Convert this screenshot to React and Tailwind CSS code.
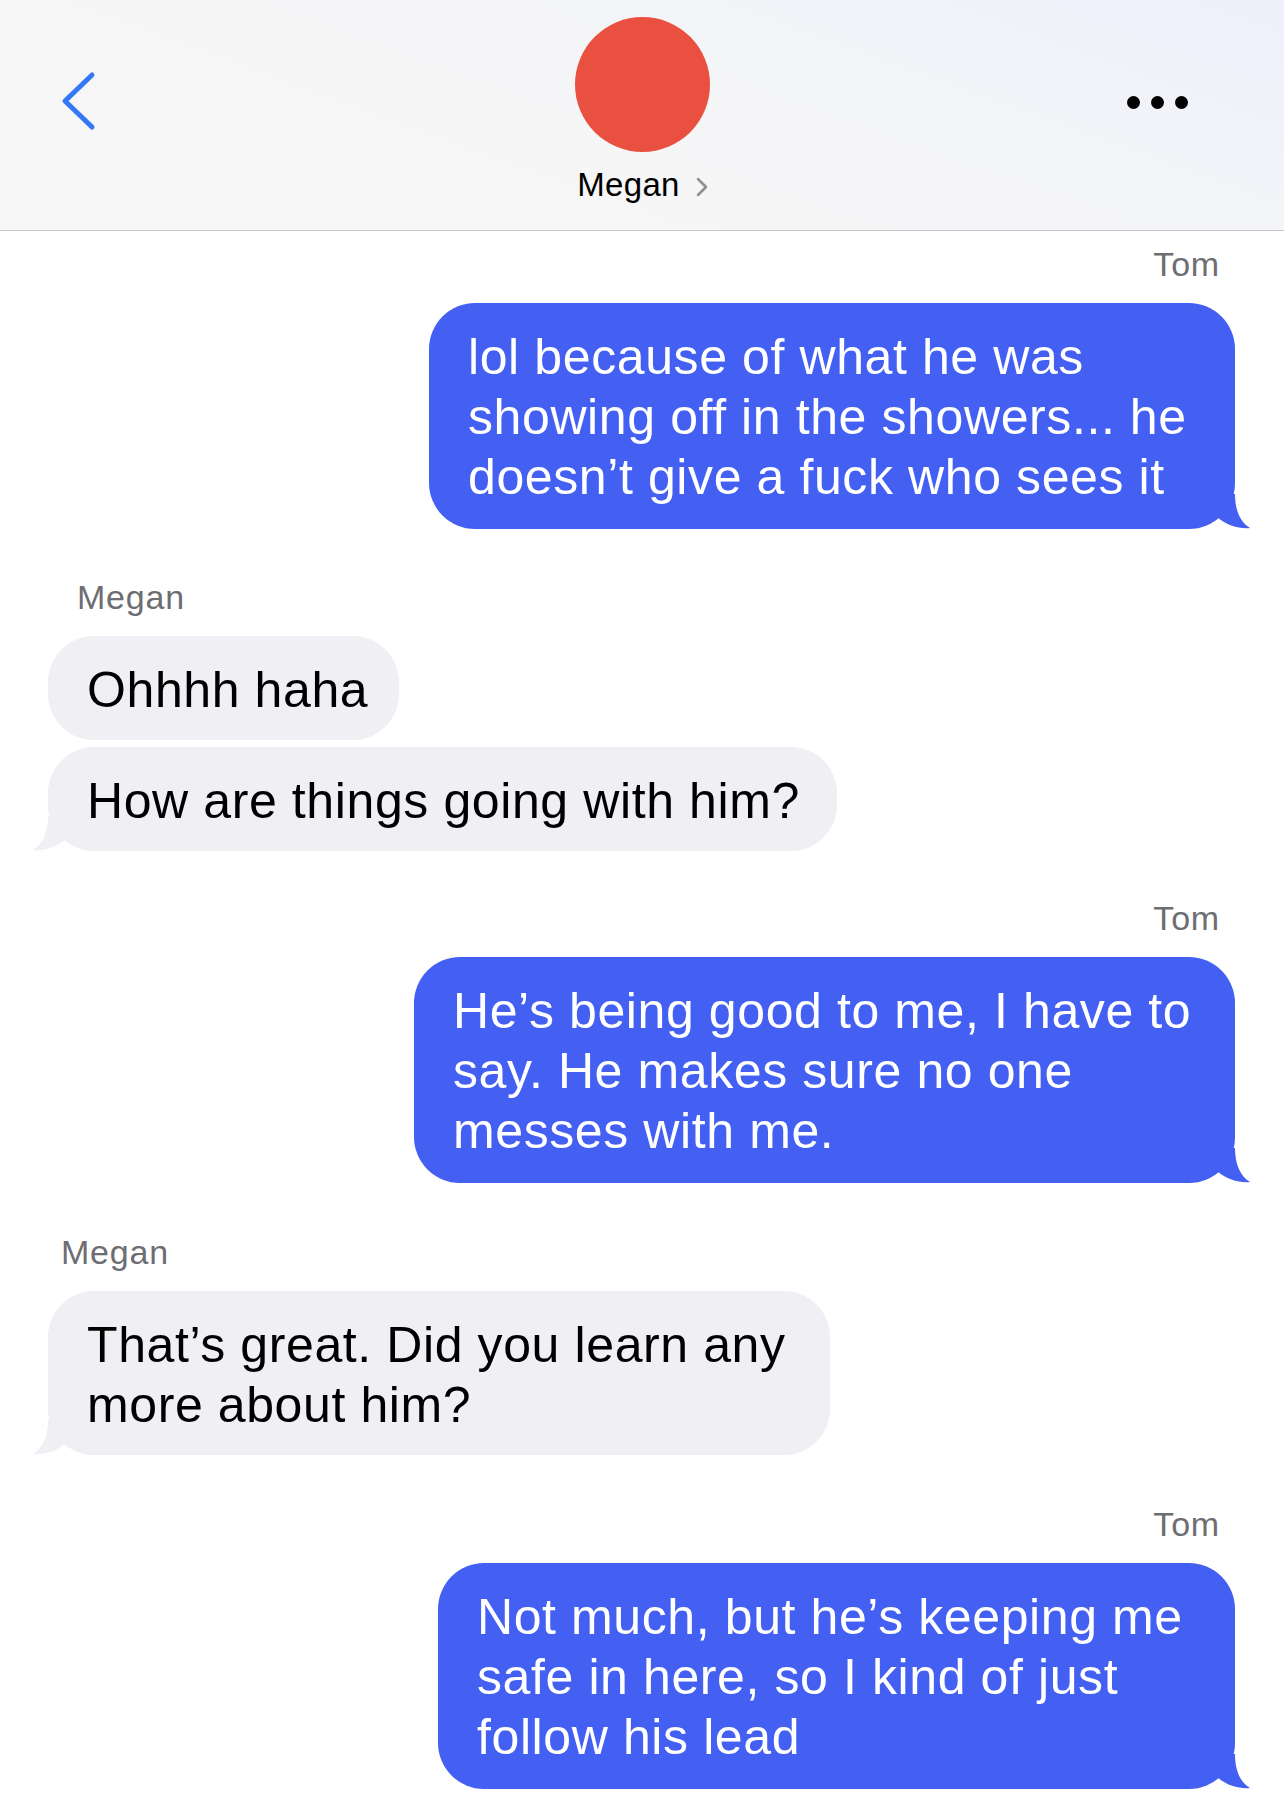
import React from "react";

// conversation, top to bottom
const groups = [
  {
    from: "Tom",
    mine: true,
    mt: "mt-[14px]",
    bubbles: [
      {
        width: "w-[806px]",
        tail: true,
        lines: [
          "lol because of what he was",
          "showing off in the showers... he",
          "doesn\u2019t give a fuck who sees it",
        ],
      },
    ],
  },
  {
    from: "Megan",
    mine: false,
    mt: "mt-[49px]",
    labelPad: "pl-[77px]",
    bubbles: [
      { width: "w-[351px]", tail: false, lines: ["Ohhhh haha"] },
      { width: "w-[789px]", tail: true, lines: ["How are things going with him?"] },
    ],
  },
  {
    from: "Tom",
    mine: true,
    mt: "mt-[48px]",
    bubbles: [
      {
        width: "w-[821px]",
        tail: true,
        lines: [
          "He\u2019s being good to me, I have to",
          "say. He makes sure no one",
          "messes with me.",
        ],
      },
    ],
  },
  {
    from: "Megan",
    mine: false,
    mt: "mt-[50px]",
    labelPad: "pl-[61px]",
    bubbles: [
      {
        width: "w-[782px]",
        tail: true,
        lines: ["That\u2019s great. Did you learn any", "more about him?"],
      },
    ],
  },
  {
    from: "Tom",
    mine: true,
    mt: "mt-[50px]",
    bubbles: [
      {
        width: "w-[797px]",
        tail: true,
        lines: [
          "Not much, but he\u2019s keeping me",
          "safe in here, so I kind of just",
          "follow his lead",
        ],
      },
    ],
  },
];

function Tail({ mine }) {
  if (mine) {
    return (
      <svg
        className="absolute -right-[17px] bottom-0"
        width="42"
        height="35"
        viewBox="0 0 42 35"
      >
        <path d="M0 0H25C25 16 30 28 40 34C30 35 17 32 7 23L0 28Z" fill="#4360f2" />
      </svg>
    );
  }
  return (
    <svg
      className="absolute -left-[17px] bottom-0"
      width="42"
      height="35"
      viewBox="0 0 42 35"
    >
      <path d="M42 0H17C17 16 12 28 2 34C12 35 25 32 35 23L42 28Z" fill="#efeff4" />
    </svg>
  );
}

function Bubble({ bubble, mine }) {
  // three-line bubbles sit a touch taller at the bottom
  const pb = bubble.lines.length > 2 ? "pb-[22px]" : "pb-[20px]";
  return (
    <div
      className={`relative ${bubble.width} rounded-[46px] pl-[39px] pt-[24px] ${pb} text-[50px] leading-[60px] tracking-[0.6px] ${
        mine ? "bg-[#4360f2] text-white" : "bg-[#efeff4] text-black"
      }`}
    >
      {bubble.lines.map((line, i) => (
        <div key={i} className="relative z-10 whitespace-nowrap">
          {line}
        </div>
      ))}
      {bubble.tail && <Tail mine={mine} />}
    </div>
  );
}

function Group({ group }) {
  return (
    <div className={`flex flex-col ${group.mt}`}>
      <div
        className={`text-[34px] leading-[38px] tracking-[0.8px] text-[#6d6d72] ${
          group.mine ? "pr-[64px] text-right" : group.labelPad
        }`}
      >
        {group.from}
      </div>
      <div
        className={`mt-[20px] flex flex-col gap-[7px] ${
          group.mine ? "items-end pr-[49px]" : "items-start pl-[48px]"
        }`}
      >
        {group.bubbles.map((b, i) => (
          <Bubble key={i} bubble={b} mine={group.mine} />
        ))}
      </div>
    </div>
  );
}

export default function App() {
  return (
    <div className="min-h-[1812px] w-[1284px] overflow-hidden bg-white font-['Liberation_Sans',Arial,sans-serif]">
      {/* conversation header */}
      <header className="flex h-[231px] items-start justify-between border-b border-[#c6c6c8] bg-[linear-gradient(200deg,#edf0fb_0%,#f4f5f8_35%,#f6f6f6_70%)]">
        <div className="w-[300px] pl-[60px] pt-[70px]">
          <svg width="40" height="62" viewBox="0 0 40 62" fill="none">
            <path
              d="M32 5L5 31L32 57"
              stroke="#3478f6"
              strokeWidth="5"
              strokeLinecap="round"
              strokeLinejoin="round"
            />
          </svg>
        </div>

        <div className="flex flex-col items-center pt-[17px]">
          <div className="h-[135px] w-[135px] rounded-full bg-[#e9503f]" />
          <div className="mt-[13px] flex items-center gap-[16px] pl-[1px]">
            <span className="text-[33px] leading-[40px] tracking-[0.3px] text-black">Megan</span>
            <svg width="12" height="20" viewBox="0 0 12 20" fill="none" className="mt-[3px]">
              <path
                d="M2 2L10 10L2 18"
                stroke="#8e8e93"
                strokeWidth="2.5"
                strokeLinecap="round"
                strokeLinejoin="round"
              />
            </svg>
          </div>
        </div>

        <div className="flex w-[300px] justify-end gap-[11px] pr-[96px] pt-[96px]">
          <span className="h-[13px] w-[13px] rounded-full bg-black" />
          <span className="h-[13px] w-[13px] rounded-full bg-black" />
          <span className="h-[13px] w-[13px] rounded-full bg-black" />
        </div>
      </header>

      <main className="flex flex-col pb-[23px]">
        {groups.map((g, i) => (
          <Group key={i} group={g} />
        ))}
      </main>
    </div>
  );
}
